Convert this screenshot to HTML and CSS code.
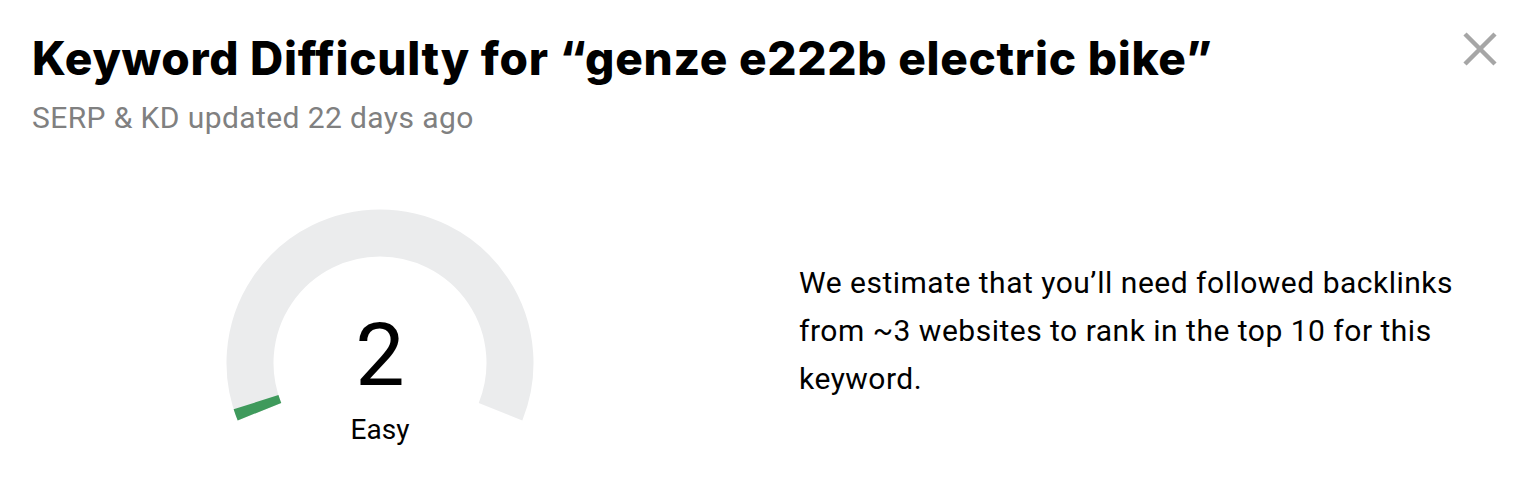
FILE: index.html
```html
<!DOCTYPE html>
<html lang="en">
<head>
    <meta charset="UTF-8">
    <meta name="viewport" content="width=device-width, initial-scale=1.0">
    <title>Keyword Difficulty</title>
    <link rel="stylesheet" href="styles.css">
</head>
<body>
    <div class="modal">
        <div class="modal-header">
            <div>
                <h1 class="title">Keyword Difficulty for “genze e222b electric bike”</h1>
                <p class="subtitle">SERP &amp; KD updated 22 days ago</p>
            </div>
            <button class="close" aria-label="Close">
                <svg width="36" height="36" viewBox="0 0 36 36">
                    <path d="M3 3 L33 33 M33 3 L3 33" stroke="#a6a6a6" stroke-width="4.5" fill="none"/>
                </svg>
            </button>
        </div>
        <div class="kd-body">
            <div class="gauge">
                <svg width="310" height="215" viewBox="0 0 310 215">
                    <!-- track: 224deg arc, open at the bottom -->
                    <path d="M34.47 203.70 A130 130 0 1 1 275.53 203.70" stroke="#ebeced" stroke-width="47" fill="none"/>
                    <!-- value: 2 of 100 -->
                    <path d="M34.47 203.70 A130 130 0 0 1 31.03 194.14" stroke="#3f9a5c" stroke-width="47" fill="none"/>
                </svg>
                <div class="gauge-label">
                    <span class="gauge-value">2</span>
                    <span class="gauge-text">Easy</span>
                </div>
            </div>
            <p class="estimate">We estimate that you’ll need followed backlinks from ~3 websites to rank in the top 10 for this keyword.</p>
        </div>
    </div>
</body>
</html>
```

FILE: styles.css
```css
body {
    margin: 0;
    background-color: #fff;
    color: #000;
    font-family: Roboto, "Noto Sans", Arial, sans-serif;
}
.modal {
    padding: 31px 38px 0 32px;
}
.modal-header {
    display: flex;
    justify-content: space-between;
    align-items: flex-start;
}
.title {
    margin: 0;
    font-family: Inter, "DejaVu Sans", sans-serif;
    font-size: 46px;
    font-weight: 800;
    line-height: 54px;
    letter-spacing: 0.7px;
}
.subtitle {
    margin: 15px 0 0;
    font-size: 30px;
    line-height: 36px;
    letter-spacing: 0.4px;
    color: #808080;
}
.close {
    border: 0;
    background: none;
    padding: 0;
    margin-top: 0;
    cursor: pointer;
}
.kd-body {
    display: flex;
    align-items: flex-start;
    margin-top: 72px;
}
.gauge {
    position: relative;
    width: 310px;
    height: 240px;
    margin-left: 193px;
}
.gauge svg {
    display: block;
}
.gauge-label {
    position: absolute;
    top: 103px;
    left: 0;
    right: 0;
    display: flex;
    flex-direction: column;
    align-items: center;
}
.gauge-value {
    font-size: 88px;
    line-height: 88px;
}
.gauge-text {
    margin-top: 17px;
    font-size: 28px;
    line-height: 28px;
}
.estimate {
    margin: 51px 0 0 264px;
    width: 680px;
    font-size: 30px;
    line-height: 48px;
    letter-spacing: 0.5px;
}
```
